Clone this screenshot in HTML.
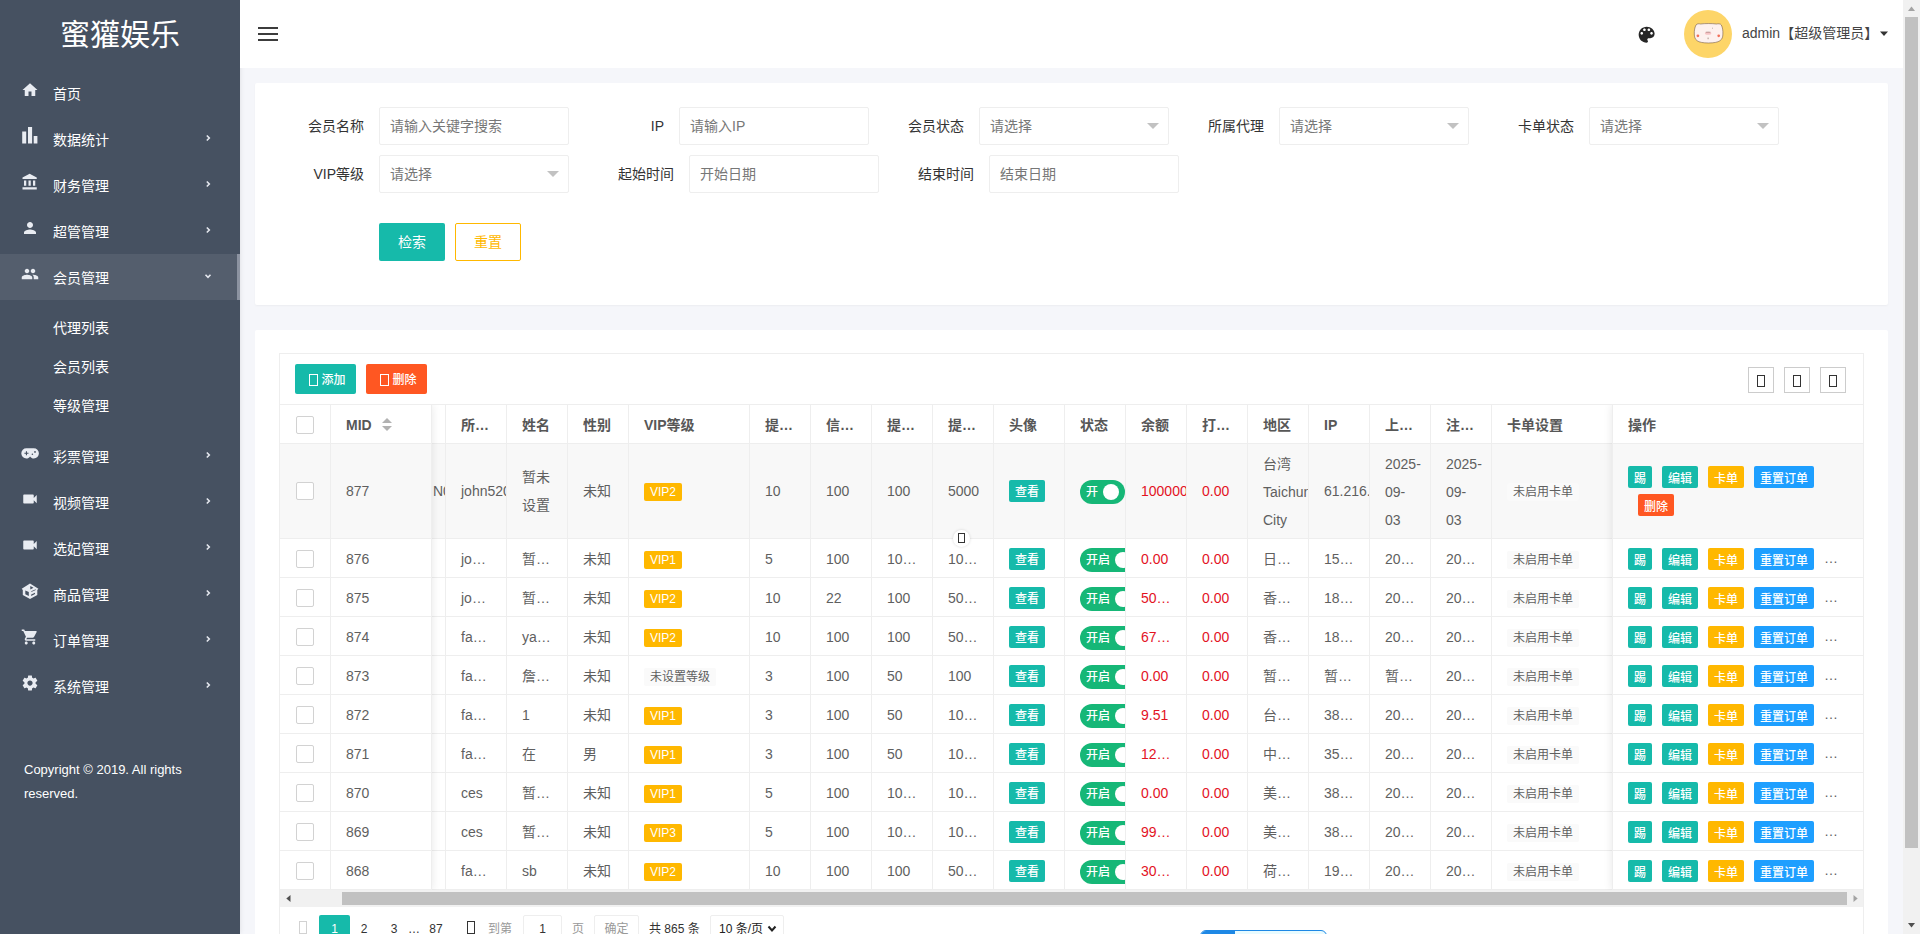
<!DOCTYPE html>
<html lang="zh-CN">
<head>
<meta charset="utf-8">
<title>会员列表</title>
<style>
*{box-sizing:border-box;margin:0;padding:0}
html,body{width:1920px;height:934px;overflow:hidden}
body{position:relative;background:#f5f6fa;font-family:"Liberation Sans","Noto Sans CJK SC",sans-serif;font-size:14px;color:#5f5f5f;line-height:1}
.abs{position:absolute}
/* ---------- sidebar ---------- */
#side{position:absolute;left:0;top:0;width:240px;height:934px;background:#465161;color:#fff;box-shadow:0 0 5px rgba(0,0,0,.1)}
#logo{position:absolute;left:0;top:0;width:240px;height:68px;line-height:69px;text-align:center;font-size:30px;color:#fff}
.mi{position:absolute;left:0;width:240px;height:46px;color:#fff;font-size:14px}
.mi .t{position:absolute;left:53px;top:1px;line-height:46px;white-space:nowrap}
.mi svg.ic{position:absolute;left:21px;top:11px;width:18px;height:18px;fill:#e9ecf2}
.mi svg.ar{position:absolute;left:204px;top:18px;width:8px;height:8px;fill:none;stroke:#e4e7ee;stroke-width:1.6}
.mi.on{background:#545e6d}
.mi.on:after{content:"";position:absolute;right:0;top:0;width:3px;height:46px;background:#8c93a1}
.sm{position:absolute;left:53px;color:#fff;font-size:14px;line-height:20px;white-space:nowrap}
#copy{position:absolute;left:24px;top:758px;width:190px;color:#fff;font-size:13px;line-height:24.400px}
/* ---------- header ---------- */
#head{position:absolute;left:240px;top:0;width:1663px;height:68px;background:#fff}
#burger i{position:absolute;left:258px;width:20px;height:1.600px;background:#3c3c3c}
#avatar{position:absolute;left:1684px;top:10px;width:48px;height:48px;border-radius:50%;background:#fdd568;overflow:hidden}
#uname{position:absolute;left:1742px;top:0;line-height:66px;font-size:14px;color:#444;white-space:nowrap}
/* ---------- page scrollbar ---------- */
#vs{position:absolute;left:1903px;top:0;width:17px;height:934px;background:#f1f1f1}
#vs .th{position:absolute;left:2px;top:17px;width:13px;height:831px;background:#c1c1c1}
/* ---------- cards ---------- */
.card{position:absolute;background:#fff;border-radius:2px}
.lbl{position:absolute;width:110px;padding-right:15px;text-align:right;line-height:38px;height:38px;color:#333;font-size:14px;white-space:nowrap}
.inp{position:absolute;width:190px;height:38px;border:1px solid #eee;border-radius:2px;background:#fff;line-height:36px;padding-left:10px;color:#777;font-size:14px;white-space:nowrap}
.inp.sel:after{content:"";position:absolute;right:9px;top:15px;border:6px solid transparent;border-top-color:#c2c2c2}
.btn{position:absolute;height:38px;line-height:38px;text-align:center;border-radius:2px;font-size:14px;color:#fff;white-space:nowrap}
</style>
<style>
#tv{position:absolute;left:279px;top:353px;width:1585px;height:640px;border:1px solid #eee;background:#fff;overflow:hidden}
#tv .c{position:absolute;overflow:hidden;white-space:nowrap;padding:0 15px;border-right:1px solid #eee;border-bottom:1px solid #eee;font-size:14px;color:#5f5f5f;line-height:38px;height:39px;padding-top:1px}
#tv .c.h{font-weight:bold;color:#575757}
#tv .c.r1{height:95px;background:#f8f8f8;line-height:28px;padding-top:33px;white-space:normal}
#tv .c.r1.l3{padding-top:6px}
#tv .c.r1.l2{padding-top:19px}
#tv .red{color:#e3131f}
#tv .c.act{padding-top:0}
.tofu{display:inline-block;border:1px solid currentColor;vertical-align:middle}
.cb{position:absolute;width:18px;height:18px;border:1px solid #d2d2d2;border-radius:2px;background:#fff}
.b{font-weight:500;display:inline-block;height:22px;line-height:26px;overflow:hidden;padding:0 6px;font-size:12px;color:#fff;border-radius:2px;vertical-align:middle;white-space:nowrap}
.b+.b{margin-left:10px}
.g{background:#16baaa}.o{background:#ffb800}.bl{background:#1e9fff}.rd{background:#ff5722}
.bd{display:inline-block;height:18px;line-height:18px;padding:0 6px;font-size:12px;color:#fff;border-radius:2px;background:#ffb800;vertical-align:middle}
.bd.gy{background:#fafafa;color:#5f5f5f}
.sw{font-weight:500;position:relative;display:inline-block;vertical-align:middle;height:24px;line-height:25px;border-radius:12px;background:#16b777;color:#fff;font-size:12px;padding:0 0 0 6px;white-space:nowrap}
.sw i{display:inline-block;width:16px;height:16px;border-radius:50%;background:#fff;vertical-align:middle;margin:-2px 5px 0 5px}
</style>
</head>
<body>

<!-- ================= SIDEBAR ================= -->
<div id="side">
  <div id="logo">蜜獾娱乐</div>
  <div class="mi" style="top:70px"><svg class="ic" viewBox="0 0 24 24"><path d="M10 20v-6h4v6h5v-8h3L12 3 2 12h3v8z"/></svg><span class="t">首页</span></div>
  <div class="mi" style="top:116px"><svg class="ic" viewBox="0 0 18 18"><path d="M1.200 4.600h4v12h-4zM7 0h4.100v16.600H7zM12.700 9h3.700v7.600h-3.700z"/></svg><span class="t">数据统计</span><svg class="ar" viewBox="0 0 8 8"><path d="M2.800 1.500 L5.300 4 L2.800 6.500"/></svg></div>
  <div class="mi" style="top:162px"><svg class="ic" viewBox="0 0 24 24"><path d="M4 10v7h3v-7H4zm6 0v7h3v-7h-3zM2 22h19v-3H2v3zm14-12v7h3v-7h-3zm-4.5-9L2 6v2h19V6l-9.500-5z"/></svg><span class="t">财务管理</span><svg class="ar" viewBox="0 0 8 8"><path d="M2.800 1.500 L5.300 4 L2.800 6.500"/></svg></div>
  <div class="mi" style="top:208px"><svg class="ic" viewBox="0 0 24 24"><path d="M12 12c2.21 0 4-1.79 4-4s-1.79-4-4-4-4 1.790-4 4 1.790 4 4 4zm0 2c-2.670 0-8 1.340-8 4v2h16v-2c0-2.660-5.330-4-8-4z"/></svg><span class="t">超管管理</span><svg class="ar" viewBox="0 0 8 8"><path d="M2.800 1.500 L5.300 4 L2.800 6.500"/></svg></div>
  <div class="mi on" style="top:254px"><svg class="ic" viewBox="0 0 24 24"><path d="M16 11c1.660 0 2.990-1.340 2.990-3S17.660 5 16 5c-1.660 0-3 1.340-3 3s1.340 3 3 3zm-8 0c1.660 0 2.990-1.340 2.990-3S9.660 5 8 5C6.340 5 5 6.340 5 8s1.340 3 3 3zm0 2c-2.330 0-7 1.170-7 3.500V19h14v-2.500c0-2.330-4.670-3.500-7-3.500zm8 0c-.290 0-.620.020-.970.050 1.160.840 1.970 1.970 1.970 3.450V19h6v-2.500c0-2.330-4.670-3.500-7-3.500z"/></svg><span class="t">会员管理</span><svg class="ar" viewBox="0 0 8 8"><path d="M1.500 2.800 L4 5.300 L6.500 2.800"/></svg></div>
  <div class="mi" style="top:433px"><svg class="ic" viewBox="0 0 18 18"><path fill-rule="evenodd" d="M5.400 4.200h7.400a5.100 5.100 0 0 1 0 10.200c-1.600 0-2.700-.600-3.300-1.500l-.400-.500-.400.500c-.600.900-1.700 1.500-3.300 1.500a5.100 5.100 0 0 1 0-10.200zM4.900 7.200v1.500H3.400v1.100h1.500v1.500H6V9.800h1.500V8.700H6V7.200zM11.400 9.500a.800.800 0 1 0 0 1.600.800.800 0 0 0 0-1.600zM14 7a.900.900 0 1 0 0 1.800A.900.900 0 0 0 14 7z"/></svg><span class="t">彩票管理</span><svg class="ar" viewBox="0 0 8 8"><path d="M2.800 1.500 L5.300 4 L2.800 6.500"/></svg></div>
  <div class="mi" style="top:479px"><svg class="ic" viewBox="0 0 24 24"><path d="M17 10.500V7c0-.550-.450-1-1-1H4c-.550 0-1 .450-1 1v10c0 .550.450 1 1 1h12c.550 0 1-.450 1-1v-3.500l4 4v-11l-4 4z"/></svg><span class="t">视频管理</span><svg class="ar" viewBox="0 0 8 8"><path d="M2.800 1.500 L5.300 4 L2.800 6.500"/></svg></div>
  <div class="mi" style="top:525px"><svg class="ic" viewBox="0 0 24 24"><path d="M17 10.500V7c0-.550-.450-1-1-1H4c-.550 0-1 .450-1 1v10c0 .550.450 1 1 1h12c.550 0 1-.450 1-1v-3.500l4 4v-11l-4 4z"/></svg><span class="t">选妃管理</span><svg class="ar" viewBox="0 0 8 8"><path d="M2.800 1.500 L5.300 4 L2.800 6.500"/></svg></div>
  <div class="mi" style="top:571px"><svg class="ic" viewBox="0 0 18 18"><path fill-rule="evenodd" d="M9 1.500 17.400 6.700 16.300 8v5L9 17 1.800 13V8L.700 6.700zM4.300 8.500 7.800 10v4L4.300 12.300zM9.300 4 12.500 5.800 9.300 7.500zM10.300 9.200 14.700 7.200v.900L10.300 10.100zM10.200 12.500 14 10.700v1.300L10.200 14z"/></svg><span class="t">商品管理</span><svg class="ar" viewBox="0 0 8 8"><path d="M2.800 1.500 L5.300 4 L2.800 6.500"/></svg></div>
  <div class="mi" style="top:617px"><svg class="ic" viewBox="0 0 24 24"><path d="M7 18c-1.100 0-1.990.900-1.990 2S5.900 22 7 22s2-.900 2-2-.900-2-2-2zM1 2v2h2l3.600 7.590-1.350 2.450c-.160.280-.250.610-.250.960 0 1.100.900 2 2 2h12v-2H7.420c-.140 0-.250-.110-.250-.250l.030-.120.900-1.630h7.450c.750 0 1.410-.410 1.750-1.030l3.580-6.490c.080-.140.120-.310.120-.480 0-.550-.450-1-1-1H5.210l-.940-2H1zm16 16c-1.100 0-1.990.900-1.990 2s.890 2 1.990 2 2-.900 2-2-.900-2-2-2z"/></svg><span class="t">订单管理</span><svg class="ar" viewBox="0 0 8 8"><path d="M2.800 1.500 L5.300 4 L2.800 6.500"/></svg></div>
  <div class="mi" style="top:663px"><svg class="ic" viewBox="0 0 24 24"><path d="M19.430 12.980c.040-.320.070-.640.070-.980s-.030-.660-.070-.980l2.110-1.650c.190-.150.240-.420.120-.640l-2-3.460c-.120-.220-.390-.300-.610-.220l-2.490 1c-.520-.400-1.080-.730-1.690-.980l-.380-2.650C14.460 2.180 14.250 2 14 2h-4c-.250 0-.460.180-.490.420l-.380 2.650c-.610.250-1.170.590-1.690.980l-2.490-1c-.230-.090-.490 0-.610.220l-2 3.460c-.130.220-.070.490.120.640l2.110 1.650c-.040.320-.070.650-.070.980s.030.660.070.980l-2.110 1.650c-.190.150-.240.420-.120.640l2 3.460c.120.220.390.300.610.220l2.490-1c.520.400 1.080.730 1.690.980l.380 2.650c.030.240.240.420.490.420h4c.250 0 .460-.180.490-.420l.380-2.650c.610-.250 1.170-.590 1.690-.980l2.490 1c.230.090.490 0 .610-.220l2-3.460c.120-.220.070-.490-.120-.640l-2.110-1.650zM12 15.500c-1.930 0-3.500-1.570-3.500-3.500s1.570-3.500 3.500-3.500 3.500 1.570 3.500 3.500-1.570 3.500-3.500 3.500z"/></svg><span class="t">系统管理</span><svg class="ar" viewBox="0 0 8 8"><path d="M2.800 1.500 L5.300 4 L2.800 6.500"/></svg></div>
  <div class="sm" style="top:318px">代理列表</div>
  <div class="sm" style="top:357px">会员列表</div>
  <div class="sm" style="top:396px">等级管理</div>
  <div id="copy">Copyright © 2019. All rights reserved.</div>
</div>

<!-- ================= HEADER ================= -->
<div id="head"></div>
<div id="burger"><i style="top:27.200px"></i><i style="top:33.300px"></i><i style="top:39.400px"></i></div>
<svg class="abs" style="left:1635.700px;top:23.500px" width="21.300" height="21.300" viewBox="0 0 24 24"><path fill="#262626" d="M12 3c-4.970 0-9 4.030-9 9s4.030 9 9 9c.830 0 1.500-.670 1.500-1.500 0-.390-.150-.740-.390-1.010-.230-.260-.380-.610-.380-.990 0-.830.670-1.500 1.500-1.500H16c2.760 0 5-2.240 5-5 0-4.420-4.030-8-9-8zm-5.500 9c-.830 0-1.500-.670-1.500-1.500S5.670 9 6.500 9 8 9.670 8 10.500 7.330 12 6.500 12zm3-4C8.670 8 8 7.330 8 6.500S8.670 5 9.500 5s1.500.670 1.500 1.500S10.330 8 9.500 8zm5 0c-.830 0-1.500-.670-1.500-1.500S13.670 5 14.500 5s1.500.670 1.500 1.500S15.330 8 14.500 8zm3 4c-.830 0-1.500-.670-1.500-1.500S16.670 9 17.500 9s1.500.670 1.500 1.500-.670 1.500-1.500 1.500z"/></svg>
<div id="avatar"><svg width="48" height="48" viewBox="0 0 48 48"><path d="M12 15C13 13.600 15 13.600 16.500 14 21 13.400 28 13.400 32.500 14 34 13.600 36.500 13.600 37.300 15 38.600 17.500 39 20.500 38.900 24 38.800 30 36 32.900 24.500 33 13 32.900 10.400 30 10.300 24 10.200 20.500 10.700 17.500 12 15Z" fill="#fdf1ef" stroke="#6b5140" stroke-width=".55"/><circle cx="13.900" cy="25.800" r="1.350" fill="#f2705a"/><circle cx="34.700" cy="25.800" r="1.350" fill="#f2705a"/><ellipse cx="24.100" cy="23.300" rx="3.200" ry="1.500" fill="#f7c4c6"/><path d="M21.800 22.200h4.600" stroke="#7a5a55" stroke-width=".5"/><path d="M24.100 27.600v1.600" stroke="#8a6a60" stroke-width=".7"/><circle cx="28.600" cy="18.100" r=".45" fill="#6b5a55"/></svg></div>
<svg class="abs" style="left:1879px;top:31px" width="10" height="6"><path d="M1 .500h8L5 5z" fill="#333"/></svg>
<div id="uname">admin【超级管理员】</div>

<!-- ================= FILTER CARD ================= -->
<div class="card" style="left:255px;top:83px;width:1633px;height:222px;box-shadow:0 1px 2px rgba(0,0,0,.04)"></div>
<div class="lbl" style="left:269px;top:107px">会员名称</div>
<div class="inp" style="left:379px;top:107px">请输入关键字搜索</div>
<div class="lbl" style="left:569px;top:107px">IP</div>
<div class="inp" style="left:679px;top:107px">请输入IP</div>
<div class="lbl" style="left:869px;top:107px">会员状态</div>
<div class="inp sel" style="left:979px;top:107px">请选择</div>
<div class="lbl" style="left:1169px;top:107px">所属代理</div>
<div class="inp sel" style="left:1279px;top:107px">请选择</div>
<div class="lbl" style="left:1479px;top:107px">卡单状态</div>
<div class="inp sel" style="left:1589px;top:107px">请选择</div>
<div class="lbl" style="left:269px;top:155px">VIP等级</div>
<div class="inp sel" style="left:379px;top:155px">请选择</div>
<div class="lbl" style="left:579px;top:155px">起始时间</div>
<div class="inp" style="left:689px;top:155px">开始日期</div>
<div class="lbl" style="left:879px;top:155px">结束时间</div>
<div class="inp" style="left:989px;top:155px">结束日期</div>
<div class="btn" style="left:379px;top:223px;width:66px;background:#16baaa">检索</div>
<div class="btn" style="left:455px;top:223px;width:66px;background:#fff;border:1px solid #ffb800;color:#ffb800;line-height:36px">重置</div>

<!-- ================= TABLE CARD ================= -->
<div class="card" style="left:255px;top:330px;width:1633px;height:620px"></div>



<div id="tv">
<div class="abs" style="left:0;top:0;width:1583px;height:51px;border-bottom:1px solid #eee"></div>
<div class="b g abs" style="left:15px;top:10px;height:30px;line-height:33px;padding:0 10px"><span class="tofu" style="width:9px;height:12px;margin:-2px 3.500px 0 4px"></span>添加</div>
<div class="b rd abs" style="left:86px;top:10px;height:30px;line-height:33px;padding:0 10px;margin:0"><span class="tofu" style="width:9px;height:12px;margin:-2px 3.500px 0 4px"></span>删除</div>
<div class="abs" style="left:1468px;top:13px;width:26px;height:26px;border:1px solid #ccc;text-align:center;line-height:24px;color:#333"><span class="tofu" style="width:8px;height:12px;margin-right:1px"></span></div>
<div class="abs" style="left:1504px;top:13px;width:26px;height:26px;border:1px solid #ccc;text-align:center;line-height:24px;color:#333"><span class="tofu" style="width:8px;height:12px;margin-right:1px"></span></div>
<div class="abs" style="left:1540px;top:13px;width:26px;height:26px;border:1px solid #ccc;text-align:center;line-height:24px;color:#333"><span class="tofu" style="width:8px;height:12px;margin-right:1px"></span></div>
<div class="c h" style="left:105px;top:51px;width:61px;"></div>
<div class="c h" style="left:166px;top:51px;width:61px;">所…</div>
<div class="c h" style="left:227px;top:51px;width:61px;">姓名</div>
<div class="c h" style="left:288px;top:51px;width:61px;">性别</div>
<div class="c h" style="left:349px;top:51px;width:121px;">VIP等级</div>
<div class="c h" style="left:470px;top:51px;width:61px;">提…</div>
<div class="c h" style="left:531px;top:51px;width:61px;">信…</div>
<div class="c h" style="left:592px;top:51px;width:61px;">提…</div>
<div class="c h" style="left:653px;top:51px;width:61px;">提…</div>
<div class="c h" style="left:714px;top:51px;width:71px;">头像</div>
<div class="c h" style="left:785px;top:51px;width:61px;">状态</div>
<div class="c h" style="left:846px;top:51px;width:61px;">余额</div>
<div class="c h" style="left:907px;top:51px;width:61px;">打…</div>
<div class="c h" style="left:968px;top:51px;width:61px;">地区</div>
<div class="c h" style="left:1029px;top:51px;width:61px;">IP</div>
<div class="c h" style="left:1090px;top:51px;width:61px;">上…</div>
<div class="c h" style="left:1151px;top:51px;width:61px;">注…</div>
<div class="c h" style="left:1212px;top:51px;width:121px;">卡单设置</div>
<div class="c r1 " style="left:105px;top:90px;width:61px;"><span style="position:absolute;left:48px;top:33px;white-space:nowrap">N0</span></div>
<div class="c r1 " style="left:166px;top:90px;width:61px;"><span style="white-space:nowrap">john520</span></div>
<div class="c r1 l2" style="left:227px;top:90px;width:61px;">暂未<br>设置</div>
<div class="c r1 " style="left:288px;top:90px;width:61px;">未知</div>
<div class="c r1 " style="left:349px;top:90px;width:121px;"><span class="bd" style="position:relative;top:0">VIP2</span></div>
<div class="c r1 " style="left:470px;top:90px;width:61px;">10</div>
<div class="c r1 " style="left:531px;top:90px;width:61px;">100</div>
<div class="c r1 " style="left:592px;top:90px;width:61px;">100</div>
<div class="c r1 " style="left:653px;top:90px;width:61px;">5000</div>
<div class="c r1 " style="left:714px;top:90px;width:71px;"><span class="b g" style="position:relative;top:-1px;line-height:24px">查看</span></div>
<div class="c r1 " style="left:785px;top:90px;width:61px;"><span class="sw" style="position:relative;top:0;padding-left:6px">开<i style="margin:-2px 6px 0 5px"></i></span></div>
<div class="c r1 " style="left:846px;top:90px;width:61px;"><span class="red" style="white-space:nowrap">100000</span></div>
<div class="c r1 " style="left:907px;top:90px;width:61px;"><span class="red">0.00</span></div>
<div class="c r1 l3" style="left:968px;top:90px;width:61px;">台湾<br><span style="white-space:nowrap">Taichung</span><br>City</div>
<div class="c r1 " style="left:1029px;top:90px;width:61px;"><span style="white-space:nowrap">61.216.</span></div>
<div class="c r1 l3" style="left:1090px;top:90px;width:61px;">2025-<br>09-<br>03</div>
<div class="c r1 l3" style="left:1151px;top:90px;width:61px;">2025-<br>09-<br>03</div>
<div class="c r1 " style="left:1212px;top:90px;width:121px;"><span class="bd gy" style="position:relative;top:0">未启用卡单</span></div>
<div class="c " style="left:105px;top:185px;width:61px;"></div>
<div class="c " style="left:166px;top:185px;width:61px;">jo…</div>
<div class="c " style="left:227px;top:185px;width:61px;">暂…</div>
<div class="c " style="left:288px;top:185px;width:61px;">未知</div>
<div class="c " style="left:349px;top:185px;width:121px;"><span class="bd" style="position:relative;top:0">VIP1</span></div>
<div class="c " style="left:470px;top:185px;width:61px;">5</div>
<div class="c " style="left:531px;top:185px;width:61px;">100</div>
<div class="c " style="left:592px;top:185px;width:61px;">10…</div>
<div class="c " style="left:653px;top:185px;width:61px;">10…</div>
<div class="c " style="left:714px;top:185px;width:71px;"><span class="b g" style="position:relative;top:-1px;line-height:24px">查看</span></div>
<div class="c " style="left:785px;top:185px;width:61px;"><span class="sw" style="position:relative;top:0">开启<i></i></span></div>
<div class="c " style="left:846px;top:185px;width:61px;"><span class="red" style="white-space:nowrap">0.00</span></div>
<div class="c " style="left:907px;top:185px;width:61px;"><span class="red">0.00</span></div>
<div class="c " style="left:968px;top:185px;width:61px;">日…</div>
<div class="c " style="left:1029px;top:185px;width:61px;">15…</div>
<div class="c " style="left:1090px;top:185px;width:61px;">20…</div>
<div class="c " style="left:1151px;top:185px;width:61px;">20…</div>
<div class="c " style="left:1212px;top:185px;width:121px;"><span class="bd gy" style="position:relative;top:0">未启用卡单</span></div>
<div class="c " style="left:105px;top:224px;width:61px;"></div>
<div class="c " style="left:166px;top:224px;width:61px;">jo…</div>
<div class="c " style="left:227px;top:224px;width:61px;">暂…</div>
<div class="c " style="left:288px;top:224px;width:61px;">未知</div>
<div class="c " style="left:349px;top:224px;width:121px;"><span class="bd" style="position:relative;top:0">VIP2</span></div>
<div class="c " style="left:470px;top:224px;width:61px;">10</div>
<div class="c " style="left:531px;top:224px;width:61px;">22</div>
<div class="c " style="left:592px;top:224px;width:61px;">100</div>
<div class="c " style="left:653px;top:224px;width:61px;">50…</div>
<div class="c " style="left:714px;top:224px;width:71px;"><span class="b g" style="position:relative;top:-1px;line-height:24px">查看</span></div>
<div class="c " style="left:785px;top:224px;width:61px;"><span class="sw" style="position:relative;top:0">开启<i></i></span></div>
<div class="c " style="left:846px;top:224px;width:61px;"><span class="red" style="white-space:nowrap">50…</span></div>
<div class="c " style="left:907px;top:224px;width:61px;"><span class="red">0.00</span></div>
<div class="c " style="left:968px;top:224px;width:61px;">香…</div>
<div class="c " style="left:1029px;top:224px;width:61px;">18…</div>
<div class="c " style="left:1090px;top:224px;width:61px;">20…</div>
<div class="c " style="left:1151px;top:224px;width:61px;">20…</div>
<div class="c " style="left:1212px;top:224px;width:121px;"><span class="bd gy" style="position:relative;top:0">未启用卡单</span></div>
<div class="c " style="left:105px;top:263px;width:61px;"></div>
<div class="c " style="left:166px;top:263px;width:61px;">fa…</div>
<div class="c " style="left:227px;top:263px;width:61px;">ya…</div>
<div class="c " style="left:288px;top:263px;width:61px;">未知</div>
<div class="c " style="left:349px;top:263px;width:121px;"><span class="bd" style="position:relative;top:0">VIP2</span></div>
<div class="c " style="left:470px;top:263px;width:61px;">10</div>
<div class="c " style="left:531px;top:263px;width:61px;">100</div>
<div class="c " style="left:592px;top:263px;width:61px;">100</div>
<div class="c " style="left:653px;top:263px;width:61px;">50…</div>
<div class="c " style="left:714px;top:263px;width:71px;"><span class="b g" style="position:relative;top:-1px;line-height:24px">查看</span></div>
<div class="c " style="left:785px;top:263px;width:61px;"><span class="sw" style="position:relative;top:0">开启<i></i></span></div>
<div class="c " style="left:846px;top:263px;width:61px;"><span class="red" style="white-space:nowrap">67…</span></div>
<div class="c " style="left:907px;top:263px;width:61px;"><span class="red">0.00</span></div>
<div class="c " style="left:968px;top:263px;width:61px;">香…</div>
<div class="c " style="left:1029px;top:263px;width:61px;">18…</div>
<div class="c " style="left:1090px;top:263px;width:61px;">20…</div>
<div class="c " style="left:1151px;top:263px;width:61px;">20…</div>
<div class="c " style="left:1212px;top:263px;width:121px;"><span class="bd gy" style="position:relative;top:0">未启用卡单</span></div>
<div class="c " style="left:105px;top:302px;width:61px;"></div>
<div class="c " style="left:166px;top:302px;width:61px;">fa…</div>
<div class="c " style="left:227px;top:302px;width:61px;">詹…</div>
<div class="c " style="left:288px;top:302px;width:61px;">未知</div>
<div class="c " style="left:349px;top:302px;width:121px;"><span class="bd gy" style="position:relative;top:0">未设置等级</span></div>
<div class="c " style="left:470px;top:302px;width:61px;">3</div>
<div class="c " style="left:531px;top:302px;width:61px;">100</div>
<div class="c " style="left:592px;top:302px;width:61px;">50</div>
<div class="c " style="left:653px;top:302px;width:61px;">100</div>
<div class="c " style="left:714px;top:302px;width:71px;"><span class="b g" style="position:relative;top:-1px;line-height:24px">查看</span></div>
<div class="c " style="left:785px;top:302px;width:61px;"><span class="sw" style="position:relative;top:0">开启<i></i></span></div>
<div class="c " style="left:846px;top:302px;width:61px;"><span class="red" style="white-space:nowrap">0.00</span></div>
<div class="c " style="left:907px;top:302px;width:61px;"><span class="red">0.00</span></div>
<div class="c " style="left:968px;top:302px;width:61px;">暂…</div>
<div class="c " style="left:1029px;top:302px;width:61px;">暂…</div>
<div class="c " style="left:1090px;top:302px;width:61px;">暂…</div>
<div class="c " style="left:1151px;top:302px;width:61px;">20…</div>
<div class="c " style="left:1212px;top:302px;width:121px;"><span class="bd gy" style="position:relative;top:0">未启用卡单</span></div>
<div class="c " style="left:105px;top:341px;width:61px;"></div>
<div class="c " style="left:166px;top:341px;width:61px;">fa…</div>
<div class="c " style="left:227px;top:341px;width:61px;">1</div>
<div class="c " style="left:288px;top:341px;width:61px;">未知</div>
<div class="c " style="left:349px;top:341px;width:121px;"><span class="bd" style="position:relative;top:0">VIP1</span></div>
<div class="c " style="left:470px;top:341px;width:61px;">3</div>
<div class="c " style="left:531px;top:341px;width:61px;">100</div>
<div class="c " style="left:592px;top:341px;width:61px;">50</div>
<div class="c " style="left:653px;top:341px;width:61px;">10…</div>
<div class="c " style="left:714px;top:341px;width:71px;"><span class="b g" style="position:relative;top:-1px;line-height:24px">查看</span></div>
<div class="c " style="left:785px;top:341px;width:61px;"><span class="sw" style="position:relative;top:0">开启<i></i></span></div>
<div class="c " style="left:846px;top:341px;width:61px;"><span class="red" style="white-space:nowrap">9.51</span></div>
<div class="c " style="left:907px;top:341px;width:61px;"><span class="red">0.00</span></div>
<div class="c " style="left:968px;top:341px;width:61px;">台…</div>
<div class="c " style="left:1029px;top:341px;width:61px;">38…</div>
<div class="c " style="left:1090px;top:341px;width:61px;">20…</div>
<div class="c " style="left:1151px;top:341px;width:61px;">20…</div>
<div class="c " style="left:1212px;top:341px;width:121px;"><span class="bd gy" style="position:relative;top:0">未启用卡单</span></div>
<div class="c " style="left:105px;top:380px;width:61px;"></div>
<div class="c " style="left:166px;top:380px;width:61px;">fa…</div>
<div class="c " style="left:227px;top:380px;width:61px;">在</div>
<div class="c " style="left:288px;top:380px;width:61px;">男</div>
<div class="c " style="left:349px;top:380px;width:121px;"><span class="bd" style="position:relative;top:0">VIP1</span></div>
<div class="c " style="left:470px;top:380px;width:61px;">3</div>
<div class="c " style="left:531px;top:380px;width:61px;">100</div>
<div class="c " style="left:592px;top:380px;width:61px;">50</div>
<div class="c " style="left:653px;top:380px;width:61px;">10…</div>
<div class="c " style="left:714px;top:380px;width:71px;"><span class="b g" style="position:relative;top:-1px;line-height:24px">查看</span></div>
<div class="c " style="left:785px;top:380px;width:61px;"><span class="sw" style="position:relative;top:0">开启<i></i></span></div>
<div class="c " style="left:846px;top:380px;width:61px;"><span class="red" style="white-space:nowrap">12…</span></div>
<div class="c " style="left:907px;top:380px;width:61px;"><span class="red">0.00</span></div>
<div class="c " style="left:968px;top:380px;width:61px;">中…</div>
<div class="c " style="left:1029px;top:380px;width:61px;">35…</div>
<div class="c " style="left:1090px;top:380px;width:61px;">20…</div>
<div class="c " style="left:1151px;top:380px;width:61px;">20…</div>
<div class="c " style="left:1212px;top:380px;width:121px;"><span class="bd gy" style="position:relative;top:0">未启用卡单</span></div>
<div class="c " style="left:105px;top:419px;width:61px;"></div>
<div class="c " style="left:166px;top:419px;width:61px;">ces</div>
<div class="c " style="left:227px;top:419px;width:61px;">暂…</div>
<div class="c " style="left:288px;top:419px;width:61px;">未知</div>
<div class="c " style="left:349px;top:419px;width:121px;"><span class="bd" style="position:relative;top:0">VIP1</span></div>
<div class="c " style="left:470px;top:419px;width:61px;">5</div>
<div class="c " style="left:531px;top:419px;width:61px;">100</div>
<div class="c " style="left:592px;top:419px;width:61px;">10…</div>
<div class="c " style="left:653px;top:419px;width:61px;">10…</div>
<div class="c " style="left:714px;top:419px;width:71px;"><span class="b g" style="position:relative;top:-1px;line-height:24px">查看</span></div>
<div class="c " style="left:785px;top:419px;width:61px;"><span class="sw" style="position:relative;top:0">开启<i></i></span></div>
<div class="c " style="left:846px;top:419px;width:61px;"><span class="red" style="white-space:nowrap">0.00</span></div>
<div class="c " style="left:907px;top:419px;width:61px;"><span class="red">0.00</span></div>
<div class="c " style="left:968px;top:419px;width:61px;">美…</div>
<div class="c " style="left:1029px;top:419px;width:61px;">38…</div>
<div class="c " style="left:1090px;top:419px;width:61px;">20…</div>
<div class="c " style="left:1151px;top:419px;width:61px;">20…</div>
<div class="c " style="left:1212px;top:419px;width:121px;"><span class="bd gy" style="position:relative;top:0">未启用卡单</span></div>
<div class="c " style="left:105px;top:458px;width:61px;"></div>
<div class="c " style="left:166px;top:458px;width:61px;">ces</div>
<div class="c " style="left:227px;top:458px;width:61px;">暂…</div>
<div class="c " style="left:288px;top:458px;width:61px;">未知</div>
<div class="c " style="left:349px;top:458px;width:121px;"><span class="bd" style="position:relative;top:0">VIP3</span></div>
<div class="c " style="left:470px;top:458px;width:61px;">5</div>
<div class="c " style="left:531px;top:458px;width:61px;">100</div>
<div class="c " style="left:592px;top:458px;width:61px;">10…</div>
<div class="c " style="left:653px;top:458px;width:61px;">10…</div>
<div class="c " style="left:714px;top:458px;width:71px;"><span class="b g" style="position:relative;top:-1px;line-height:24px">查看</span></div>
<div class="c " style="left:785px;top:458px;width:61px;"><span class="sw" style="position:relative;top:0">开启<i></i></span></div>
<div class="c " style="left:846px;top:458px;width:61px;"><span class="red" style="white-space:nowrap">99…</span></div>
<div class="c " style="left:907px;top:458px;width:61px;"><span class="red">0.00</span></div>
<div class="c " style="left:968px;top:458px;width:61px;">美…</div>
<div class="c " style="left:1029px;top:458px;width:61px;">38…</div>
<div class="c " style="left:1090px;top:458px;width:61px;">20…</div>
<div class="c " style="left:1151px;top:458px;width:61px;">20…</div>
<div class="c " style="left:1212px;top:458px;width:121px;"><span class="bd gy" style="position:relative;top:0">未启用卡单</span></div>
<div class="c " style="left:105px;top:497px;width:61px;"></div>
<div class="c " style="left:166px;top:497px;width:61px;">fa…</div>
<div class="c " style="left:227px;top:497px;width:61px;">sb</div>
<div class="c " style="left:288px;top:497px;width:61px;">未知</div>
<div class="c " style="left:349px;top:497px;width:121px;"><span class="bd" style="position:relative;top:0">VIP2</span></div>
<div class="c " style="left:470px;top:497px;width:61px;">10</div>
<div class="c " style="left:531px;top:497px;width:61px;">100</div>
<div class="c " style="left:592px;top:497px;width:61px;">100</div>
<div class="c " style="left:653px;top:497px;width:61px;">50…</div>
<div class="c " style="left:714px;top:497px;width:71px;"><span class="b g" style="position:relative;top:-1px;line-height:24px">查看</span></div>
<div class="c " style="left:785px;top:497px;width:61px;"><span class="sw" style="position:relative;top:0">开启<i></i></span></div>
<div class="c " style="left:846px;top:497px;width:61px;"><span class="red" style="white-space:nowrap">30…</span></div>
<div class="c " style="left:907px;top:497px;width:61px;"><span class="red">0.00</span></div>
<div class="c " style="left:968px;top:497px;width:61px;">荷…</div>
<div class="c " style="left:1029px;top:497px;width:61px;">19…</div>
<div class="c " style="left:1090px;top:497px;width:61px;">20…</div>
<div class="c " style="left:1151px;top:497px;width:61px;">20…</div>
<div class="c " style="left:1212px;top:497px;width:121px;"><span class="bd gy" style="position:relative;top:0">未启用卡单</span></div>
<div class="abs" style="left:0;top:51px;width:152px;height:485px;background:#fff;box-shadow:1px 0 8px rgba(0,0,0,.08);clip-path:inset(0 -12px 0 0)"></div>
<div class="c h" style="left:0px;top:51px;width:51px;"><span class="cb" style="left:16px;top:11px"></span></div>
<div class="c h" style="left:51px;top:51px;width:101px;">MID<span style="position:absolute;left:51px;top:13px;border:5px solid transparent;border-top:0;border-bottom-color:#b2b2b2"></span><span style="position:absolute;left:51px;top:21px;border:5px solid transparent;border-bottom:0;border-top-color:#b2b2b2"></span></div>
<div class="c r1" style="left:0px;top:90px;width:51px;"><span class="cb" style="left:16px;top:38px"></span></div>
<div class="c r1" style="left:51px;top:90px;width:101px;">877</div>
<div class="c " style="left:0px;top:185px;width:51px;"><span class="cb" style="left:16px;top:11px"></span></div>
<div class="c " style="left:51px;top:185px;width:101px;">876</div>
<div class="c " style="left:0px;top:224px;width:51px;"><span class="cb" style="left:16px;top:11px"></span></div>
<div class="c " style="left:51px;top:224px;width:101px;">875</div>
<div class="c " style="left:0px;top:263px;width:51px;"><span class="cb" style="left:16px;top:11px"></span></div>
<div class="c " style="left:51px;top:263px;width:101px;">874</div>
<div class="c " style="left:0px;top:302px;width:51px;"><span class="cb" style="left:16px;top:11px"></span></div>
<div class="c " style="left:51px;top:302px;width:101px;">873</div>
<div class="c " style="left:0px;top:341px;width:51px;"><span class="cb" style="left:16px;top:11px"></span></div>
<div class="c " style="left:51px;top:341px;width:101px;">872</div>
<div class="c " style="left:0px;top:380px;width:51px;"><span class="cb" style="left:16px;top:11px"></span></div>
<div class="c " style="left:51px;top:380px;width:101px;">871</div>
<div class="c " style="left:0px;top:419px;width:51px;"><span class="cb" style="left:16px;top:11px"></span></div>
<div class="c " style="left:51px;top:419px;width:101px;">870</div>
<div class="c " style="left:0px;top:458px;width:51px;"><span class="cb" style="left:16px;top:11px"></span></div>
<div class="c " style="left:51px;top:458px;width:101px;">869</div>
<div class="c " style="left:0px;top:497px;width:51px;"><span class="cb" style="left:16px;top:11px"></span></div>
<div class="c " style="left:51px;top:497px;width:101px;">868</div>
<div class="abs" style="left:1332px;top:51px;width:251px;height:485px;background:#fff;box-shadow:-1px 0 8px rgba(0,0,0,.08);border-left:1px solid #eee;clip-path:inset(0 0 0 -12px)"></div>
<div class="c h" style="left:1333px;top:51px;width:251px;border-right:0">操作</div>
<div class="c r1 l2" style="left:1333px;top:90px;width:251px;border-right:0"><span style="display:block;margin-top:-1px"><span class="b g">踢</span><span class="b g">编辑</span><span class="b o">卡单</span><span class="b bl">重置订单</span><span class="b rd">删除</span></span></div>
<div class="c act" style="left:1333px;top:185px;width:251px;border-right:0"><span style="display:inline-block;margin-top:-2px;vertical-align:middle;line-height:22px"><span class="b g">踢</span><span class="b g">编辑</span><span class="b o">卡单</span><span class="b bl">重置订单</span></span><span style="margin-left:10px">…</span></div>
<div class="c act" style="left:1333px;top:224px;width:251px;border-right:0"><span style="display:inline-block;margin-top:-2px;vertical-align:middle;line-height:22px"><span class="b g">踢</span><span class="b g">编辑</span><span class="b o">卡单</span><span class="b bl">重置订单</span></span><span style="margin-left:10px">…</span></div>
<div class="c act" style="left:1333px;top:263px;width:251px;border-right:0"><span style="display:inline-block;margin-top:-2px;vertical-align:middle;line-height:22px"><span class="b g">踢</span><span class="b g">编辑</span><span class="b o">卡单</span><span class="b bl">重置订单</span></span><span style="margin-left:10px">…</span></div>
<div class="c act" style="left:1333px;top:302px;width:251px;border-right:0"><span style="display:inline-block;margin-top:-2px;vertical-align:middle;line-height:22px"><span class="b g">踢</span><span class="b g">编辑</span><span class="b o">卡单</span><span class="b bl">重置订单</span></span><span style="margin-left:10px">…</span></div>
<div class="c act" style="left:1333px;top:341px;width:251px;border-right:0"><span style="display:inline-block;margin-top:-2px;vertical-align:middle;line-height:22px"><span class="b g">踢</span><span class="b g">编辑</span><span class="b o">卡单</span><span class="b bl">重置订单</span></span><span style="margin-left:10px">…</span></div>
<div class="c act" style="left:1333px;top:380px;width:251px;border-right:0"><span style="display:inline-block;margin-top:-2px;vertical-align:middle;line-height:22px"><span class="b g">踢</span><span class="b g">编辑</span><span class="b o">卡单</span><span class="b bl">重置订单</span></span><span style="margin-left:10px">…</span></div>
<div class="c act" style="left:1333px;top:419px;width:251px;border-right:0"><span style="display:inline-block;margin-top:-2px;vertical-align:middle;line-height:22px"><span class="b g">踢</span><span class="b g">编辑</span><span class="b o">卡单</span><span class="b bl">重置订单</span></span><span style="margin-left:10px">…</span></div>
<div class="c act" style="left:1333px;top:458px;width:251px;border-right:0"><span style="display:inline-block;margin-top:-2px;vertical-align:middle;line-height:22px"><span class="b g">踢</span><span class="b g">编辑</span><span class="b o">卡单</span><span class="b bl">重置订单</span></span><span style="margin-left:10px">…</span></div>
<div class="c act" style="left:1333px;top:497px;width:251px;border-right:0"><span style="display:inline-block;margin-top:-2px;vertical-align:middle;line-height:22px"><span class="b g">踢</span><span class="b g">编辑</span><span class="b o">卡单</span><span class="b bl">重置订单</span></span><span style="margin-left:10px">…</span></div>
<div class="abs" style="left:673px;top:176px;width:17px;height:17px;border-radius:50%;background:#fff;box-shadow:0 0 3px rgba(0,0,0,.15);text-align:center;line-height:14px;color:#333"><span class="tofu" style="width:7px;height:10px"></span></div>
<div class="abs" style="left:0;top:536px;width:1583px;height:17px;background:#f1f1f1"><div class="abs" style="left:62px;top:2px;width:1505px;height:13px;background:#c1c1c1"></div><svg class="abs" style="left:0;top:0" width="17" height="17"><path d="M10.500 5 L6.300 8.500 L10.500 12Z" fill="#505050"/></svg><svg class="abs" style="left:1566px;top:0" width="17" height="17"><path d="M7.500 5 L11.700 8.500 L7.500 12Z" fill="#a3a3a3"/></svg></div>
<span class="tofu abs" style="left:19px;top:567px;width:8px;height:13px;color:#d2d2d2"></span>
<div class="abs" style="left:39px;top:561px;width:31px;height:28px;line-height:28px;text-align:center;color:#fff;background:#16baaa;border-radius:2px;font-size:12px">1</div>
<div class="abs" style="left:74px;top:561px;width:20px;height:28px;line-height:28px;text-align:center;color:#333;font-size:12px">2</div>
<div class="abs" style="left:104px;top:561px;width:20px;height:28px;line-height:28px;text-align:center;color:#333;font-size:12px">3</div>
<div class="abs" style="left:124px;top:561px;width:20px;height:28px;line-height:28px;text-align:center;color:#333;font-size:12px">…</div>
<div class="abs" style="left:146px;top:561px;width:20px;height:28px;line-height:28px;text-align:center;color:#333;font-size:12px">87</div>
<span class="tofu abs" style="left:187px;top:567px;width:8px;height:13px;color:#333"></span>
<div class="abs" style="left:208px;top:561px;line-height:28px;color:#999;font-size:12px">到第</div>
<div class="abs" style="left:243px;top:561px;width:39px;height:28px;line-height:26px;text-align:center;border:1px solid #eee;border-radius:2px;color:#333;font-size:12px">1</div>
<div class="abs" style="left:292px;top:561px;line-height:28px;color:#999;font-size:12px">页</div>
<div class="abs" style="left:314px;top:561px;width:45px;height:28px;line-height:26px;text-align:center;border:1px solid #eee;border-radius:2px;color:#999;font-size:12px">确定</div>
<div class="abs" style="left:369px;top:561px;line-height:28px;color:#333;font-size:12px">共 865 条</div>
<div class="abs" style="left:430px;top:561px;width:74px;height:28px;line-height:26px;padding-left:8px;border:1px solid #eee;border-radius:2px;color:#222;font-size:12px">10 条/页<svg class="abs" style="right:6px;top:9px" width="10" height="8"><path d="M1.500 1.500 L5 5.500 L8.500 1.500" fill="none" stroke="#222" stroke-width="2"/></svg></div>
</div>
<div class="abs" style="left:1200px;top:930px;width:127px;height:12px;border:1px solid #1e88e5;border-radius:6px;background:#e8fbff;overflow:hidden"><div style="width:34px;height:12px;background:#1e88e5"></div></div>

<!-- page scrollbar -->
<div id="vs"><div class="th"></div>
<svg class="abs" style="left:0;top:0" width="17" height="17"><path d="M5 11 L8.500 6.500 L12 11Z" fill="#a3a3a3"/></svg>
<svg class="abs" style="left:0;top:917px" width="17" height="17"><path d="M5 6 L8.500 10.500 L12 6Z" fill="#505050"/></svg>
</div>
</body>
</html>
